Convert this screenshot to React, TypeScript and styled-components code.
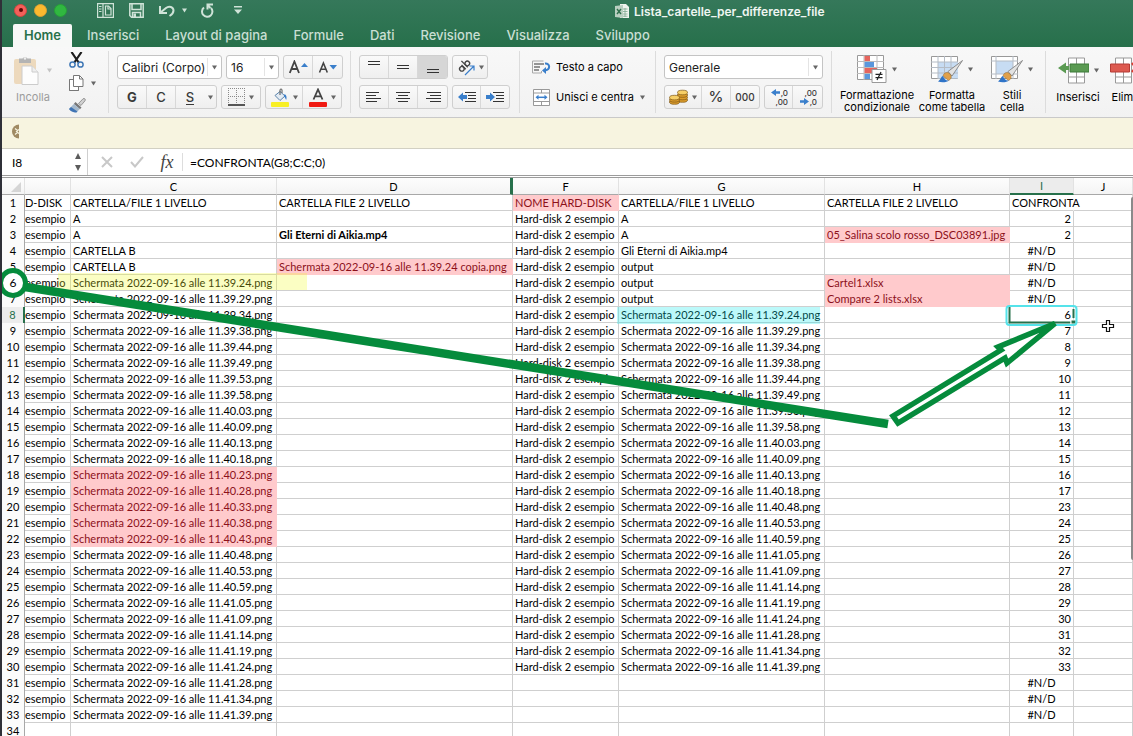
import React from "react";
import styled, { createGlobalStyle, css } from "styled-components";

const GlobalStyle = createGlobalStyle`
  *, *::before, *::after { box-sizing: border-box; }
  html, body { margin: 0; padding: 0; }
  body { background: #fff; color: #000; font-family: Inter, "Liberation Sans", sans-serif; font-size: 12px; overflow: hidden; }
  button, input, select { font: inherit; color: inherit; margin: 0; padding: 0; }
  svg { display: block; flex: none; }
`;

const sheetFont = `Lato, "Liberation Sans", sans-serif`;

/* ---------- window ---------- */

const Window = styled.div`
  display: flex;
  flex-direction: column;
  height: 100vh;
  border-left: 2px solid #2f3038;
  overflow: hidden;
`;

const Header = styled.header`
  flex: none;
  background: linear-gradient(#35785a, #27704b);
`;

const TitleBar = styled.div`
  display: flex;
  align-items: center;
  height: 23px;
`;

const TitleTools = styled.div`
  display: flex;
  align-items: center;
  width: 613px;
  height: 23px;
  padding: 0 0 3px 12px;
`;

const Lights = styled.div`
  display: flex;
  gap: 7px;
  width: 83px;
`;

const Light = styled.button<{ $color: string; $ring: string }>`
  width: 13px;
  height: 13px;
  border: 1px solid ${(p) => p.$ring};
  border-radius: 50%;
  background: ${(p) => p.$color};
  display: grid;
  place-items: center;
`;

const LightDot = styled.span`
  width: 4px;
  height: 4px;
  border-radius: 50%;
  background: #5b0705;
`;

const QuickButton = styled.button<{ $gap?: number }>`
  border: 0;
  background: none;
  margin-right: ${(p) => p.$gap ?? 12}px;
`;

const Title = styled.h1`
  display: flex;
  align-items: center;
  gap: 5px;
  margin: 0;
  color: #eef5f1;
  font-size: 12px;
  font-weight: 600;
  white-space: nowrap;
`;

const Tabs = styled.nav`
  display: flex;
  height: 24px;
  padding: 1px 0 0 11px;
`;

const Tab = styled.button<{ $active?: boolean }>`
  border: 0;
  border-radius: 2px 2px 0 0;
  height: 23px;
  padding: 0 ${(p) => (p.$active ? 11 : 13)}px;
  margin-right: ${(p) => (p.$active ? 2 : 0)}px;
  background: ${(p) => (p.$active ? "#f7f8f7" : "transparent")};
  color: ${(p) => (p.$active ? "#277049" : "#c9dfd3")};
  font-size: 13px;
  font-weight: ${(p) => (p.$active ? 600 : 500)};
  line-height: 21px;
  white-space: nowrap;
`;

/* ---------- ribbon ---------- */

const Ribbon = styled.div`
  flex: none;
  display: flex;
  height: 71px;
  overflow: hidden;
  background: linear-gradient(#f8f8f8, #f2f2f2);
  border-bottom: 1px solid #c9c9c9;
`;

const Group = styled.section<{ $w?: number; $row?: boolean }>`
  flex: none;
  display: flex;
  flex-direction: ${(p) => (p.$row ? "row" : "column")};
  gap: 6px;
  width: ${(p) => (p.$w ? p.$w + "px" : "auto")};
  height: 62px;
  margin-top: 4px;
  padding: 4px 0 0 8px;
  border-right: 1px solid #dcdcdc;
`;

const Line = styled.div`
  display: flex;
  gap: 4px;
  height: 24px;
`;

const Segments = styled.div`
  display: flex;
  height: 24px;
  border: 1px solid #cfcfcf;
  border-radius: 3px;
  background: linear-gradient(#fafafa, #efefef);
  overflow: hidden;
`;

const Segment = styled.button<{ $w?: number; $on?: boolean; $plain?: boolean }>`
  display: flex;
  align-items: center;
  justify-content: center;
  gap: 4px;
  width: ${(p) => p.$w ?? 29}px;
  border: 0;
  border-right: ${(p) => (p.$plain ? "0" : "1px solid #d8d8d8")};
  background: ${(p) => (p.$on ? "#d6d6d6" : "transparent")};
  color: #3a3a3a;
  font-size: 13px;
  &:last-child { border-right: 0; }
`;

const Glyph = styled.span<{ $bold?: boolean; $under?: boolean; $size?: number }>`
  font-size: ${(p) => p.$size ?? 13}px;
  font-weight: ${(p) => (p.$bold ? 700 : 500)};
  line-height: 14px;
  border-bottom: ${(p) => (p.$under ? "1px solid #3a3a3a" : "0")};
`;

const Stack = styled.span`
  display: flex;
  flex-direction: column;
  align-items: center;
  gap: 1px;
`;

const SelectBox = styled.label<{ $w: number }>`
  display: flex;
  align-items: center;
  width: ${(p) => p.$w}px;
  height: 24px;
  border: 1px solid #c4c4c4;
  border-radius: 3px;
  background: #fff;
`;

const Select = styled.select`
  flex: 1;
  min-width: 0;
  height: 22px;
  padding-left: 4px;
  border: 0;
  appearance: none;
  background: transparent;
  color: #222;
  font-size: 12px;
`;

const SelectArrow = styled.span`
  display: grid;
  place-items: center;
  width: 14px;
  height: 18px;
  border-left: 1px solid #e4e4e4;
`;

const TextButton = styled.button`
  display: flex;
  align-items: center;
  gap: 6px;
  height: 24px;
  padding-left: 4px;
  border: 0;
  background: none;
  font-size: 11px;
  white-space: nowrap;
`;

const TextIcon = styled.span`
  display: flex;
  justify-content: center;
  width: 18px;
`;

const BigButton = styled.button<{ $w: number; $dim?: boolean }>`
  flex: none;
  display: flex;
  flex-direction: column;
  align-items: center;
  width: ${(p) => p.$w}px;
  border: 0;
  background: none;
  font-size: 11px;
  line-height: 12px;
  white-space: nowrap;
  color: ${(p) => (p.$dim ? "#8d8d8d" : "#000")};
  opacity: ${(p) => (p.$dim ? 0.85 : 1)};
`;

const BigIcon = styled.span<{ $gap?: number }>`
  display: flex;
  align-items: center;
  gap: ${(p) => p.$gap ?? 5}px;
  height: 30px;
  margin-bottom: 6px;
`;

const ClipTools = styled.div`
  display: flex;
  flex-direction: column;
  justify-content: space-between;
  height: 61px;
  margin: -3px 0 0 7px;
`;

const IconButton = styled.button`
  display: flex;
  align-items: center;
  gap: 7px;
  border: 0;
  background: none;
`;

/* ---------- bars ---------- */

const Notice = styled.div`
  flex: none;
  display: flex;
  align-items: center;
  height: 31px;
  padding: 0 0 3px 8px;
  background: #f7f4e0;
  border-bottom: 1px solid #d2d0c3;
`;

const FormulaBar = styled.div`
  flex: none;
  display: flex;
  align-items: center;
  height: 29px;
  background: #fff;
  border-bottom: 3px double #9b9b9b;
  font-family: ${sheetFont};
`;

const NameBox = styled.input`
  width: 72px;
  height: 24px;
  padding-left: 10px;
  border: 0;
  outline: 0;
  font-size: 12px;
  background: transparent;
`;

const Spinner = styled.button`
  width: 14px;
  height: 26px;
  border: 0;
  background: none;
  border-right: 1px solid #cfcfcf;
`;

const FormulaTool = styled.button`
  display: grid;
  place-items: center;
  width: 30px;
  height: 26px;
  border: 0;
  background: none;
  font-family: "Liberation Serif", serif;
  font-style: italic;
  font-size: 18px;
  color: #444;
`;

const FormulaTools = styled.div`
  display: flex;
  align-items: center;
  padding-left: 4px;
  height: 18px;
  border-right: 1px solid #ddd;
`;

const FormulaInput = styled.input`
  flex: 1;
  min-width: 0;
  height: 24px;
  padding-left: 7px;
  border: 0;
  outline: 0;
  font-size: 12px;
  background: transparent;
`;

/* ---------- sheet ---------- */

const Sheet = styled.main`
  position: relative;
  flex: 1;
  min-height: 0;
`;

const Grid = styled.table`
  width: 100%;
  table-layout: fixed;
  border-collapse: separate;
  border-spacing: 0;
  font-family: ${sheetFont};
  font-size: 11px;
  line-height: 15px;
`;

const ColHead = styled.th<{ $active?: boolean; $mark?: boolean }>`
  height: 17px;
  padding: 0;
  font-weight: 400;
  line-height: 15px;
  background: ${(p) => (p.$active ? "#ececec" : "linear-gradient(#fdfdfd, #f4f4f4)")};
  color: ${(p) => (p.$active ? "#27704b" : "#000")};
  border-right: 1px solid #e2e2e2;
  border-bottom: 1px solid #a8a8a8;
  ${(p) => p.$active && css`border-bottom: 2px solid #27704b;`}
  ${(p) => p.$mark && css`border-right: 3px solid #27704b;`}
`;

const RowHead = styled.th<{ $active?: boolean }>`
  height: 16px;
  padding: 0 0 1px;
  font-weight: 400;
  text-align: center;
  background: ${(p) => (p.$active ? "#ececec" : "#fbfbfb")};
  color: ${(p) => (p.$active ? "#27704b" : "#000")};
  border-right: 1px solid #a8a8a8;
  ${(p) => p.$active && css`border-right: 2px solid #27704b;`}
`;

type Align = "left" | "center" | "right";

const Cell = styled.td<{ $align?: Align; $flag?: boolean; $bold?: boolean; $spill?: boolean; $cut?: boolean }>`
  height: 16px;
  padding: 0 2px;
  padding-left: ${(p) => (p.$cut ? 0 : 2)}px;
  white-space: nowrap;
  overflow: ${(p) => (p.$cut ? "hidden" : "visible")};
  text-align: ${(p) => p.$align ?? "left"};
  font-weight: ${(p) => (p.$bold ? 700 : 400)};
  color: ${(p) => (p.$flag ? "#8c101a" : "#000")};
  background: ${(p) => (p.$flag ? "#ffcacc" : "transparent")};
  border-right: 1px solid ${(p) => (p.$flag ? "#ffcacc" : p.$spill ? "transparent" : "#cfcfcf")};
  border-bottom: 1px solid ${(p) => (p.$flag ? "#ffcacc" : "#cfcfcf")};
`;

const Annotations = styled.svg`
  position: absolute;
  top: 0;
  left: 0;
  overflow: visible;
  pointer-events: none;
`;

const Highlight = styled.rect`
  opacity: 0.28;
`;

const ScrollThumb = styled.div`
  position: absolute;
  top: 19px;
  right: 0;
  width: 2px;
  height: 363px;
  border-radius: 2px 0 0 2px;
  background: #8a8a8a;
`;

/* ---------- icons ---------- */

const Down = ({ color = "#666", w = 6 }: { color?: string; w?: number }) => (
  <svg width={w} height={5} viewBox="0 0 6 5"><path d="M0 0h6L3 5z" fill={color} /></svg>
);

const quick = "#cfe3d8";

const IconPanes = () => (
  <svg width="17" height="15" viewBox="0 0 17 15" fill="none" stroke={quick} strokeWidth="1.2">
    <path d="M.6.600h15.800v13.800H.6zM6 1v13" />
    <path d="M2 3.500h2.500M2 6h2.500M2 8.500h2.500" strokeWidth="1" />
    <path d="M8.500 3h3l2.500 2.500V12H8.500z" /><path d="M11 3v3h3" />
  </svg>
);
const IconSave = () => (
  <svg width="15" height="15" viewBox="0 0 15 15" fill="none" stroke={quick} strokeWidth="1.500">
    <path d="M.8.8h13.400v13.400H2.500L.8 12.500zM3 1v5.500h9V1" />
    <path d="M3.500 14V9.500h8V14" /><path d="M4.500 10.500H7V14H4.500z" fill={quick} stroke="none" />
  </svg>
);
const IconUndo = () => (
  <svg width="16" height="13" viewBox="0 0 16 13" fill="none" stroke={quick} strokeWidth="2">
    <path d="M1 2v7h7M1.500 8.500L7 4c3-2.500 7.500-1 7.500 2.500 0 2.500-1.500 4-4 5.500" />
  </svg>
);
const IconRedo = () => (
  <svg width="13" height="15" viewBox="0 0 13 15" fill="none" stroke={quick} strokeWidth="2">
    <path d="M3 4.500A5.200 5.200 0 1 0 10 5" /><path d="M6.500 6.500V1.500H12M6.500 2l3 3" />
  </svg>
);
const IconCustomize = () => (
  <svg width="8" height="8" viewBox="0 0 8 8" fill={quick}><path d="M0 0h8v1.500H0zM0 3.500h8L4 8z" /></svg>
);
const IconDoc = () => (
  <svg width="14" height="15" viewBox="0 0 14 15">
    <path d="M5 0h6l3 3v11H5z" fill="#eef3ee" />
    <path d="M7.500 5h5M7.500 7.500h5M7.500 10h5M7.500 12.200h5M10 4v9" stroke="#7ea890" strokeWidth=".8" />
    <path d="M0 2l8-1v13l-8-1z" fill="#b9cfc1" />
    <path d="M2 5l4 5M6 5l-4 5" stroke="#2f6f4c" strokeWidth="1.400" />
  </svg>
);
const IconPaste = () => (
  <svg width="25" height="31" viewBox="0 0 25 31">
    <rect x="0" y="4" width="22" height="25" rx="2" fill="#ecd5b4" />
    <path d="M5 3.500h3.500a3 3 0 0 1 5 0H17V8H5z" fill="#a9a9a9" />
    <circle cx="11" cy="3.500" r="1.200" fill="#eee" />
    <path d="M8 11h10l6 6v12.500H8z" fill="#fff" stroke="#c6c6c6" /><path d="M18 11v6h6" fill="#eee" stroke="#c6c6c6" />
  </svg>
);
const IconCut = () => (
  <svg width="15" height="16" viewBox="0 0 15 16" fill="none">
    <path d="M2.500 0l7.500 11M12.500 0L5 11" stroke="#1d1d1d" strokeWidth="2.200" />
    <circle cx="3.500" cy="12.500" r="2.600" stroke="#3f77b5" strokeWidth="1.500" /><circle cx="11.500" cy="12.500" r="2.600" stroke="#3f77b5" strokeWidth="1.500" />
  </svg>
);
const IconCopy = () => (
  <svg width="15" height="16" viewBox="0 0 15 16" fill="#fff" stroke="#777">
    <path d="M.5 4.500h4V15.500h-4z" />
    <path d="M.5 4.500h5v11h4v-4" />
    <path d="M.5 4.500v11h9v-4" />
    <path d="M4.500.5h6l3.500 3.500v7.500H4.500z" /><path d="M10.500.5V4H14" fill="none" />
  </svg>
);
const IconBrush = () => (
  <svg width="17" height="15" viewBox="0 0 17 15">
    <path d="M9.500 5.500L14 .8c1.500-1 3 .6 2 2L12 7.500z" fill="#d0d0d0" stroke="#777" strokeWidth=".7" />
    <path d="M6.500 4l6 5.500-1.500 1.800L4.800 6z" fill="#777" />
    <path d="M4.800 6l6 5-3.500 3.500C4 14.500 1.500 13 0 11z" fill="#a5b9cc" />
    <path d="M2 9l6.500 4.500-1.200 1C4 14.500 1.500 13 0 11z" fill="#3f74b5" />
  </svg>
);
const SizeLetter = ({ up }: { up?: boolean }) => (
  <svg width="19" height="14" viewBox="0 0 19 14">
    {up ? <path d="M.8 13L5.400 1.500 10 13M2.500 9h6" fill="none" stroke="#444" strokeWidth="1.800" /> : <path d="M1.500 12.500l3.900-9.500 3.900 9.500M3 9.200h5" fill="none" stroke="#444" strokeWidth="1.600" />}
    <path d={up ? "M12 7h7l-3.500-4z" : "M11.500 5H19l-3.700 4.500z"} fill="#3a7fcb" />
  </svg>
);
const IconBorders = () => (
  <svg width="17" height="18" viewBox="0 0 17 18" fill="none" stroke="#8a8a8a">
    <path d="M.5 0v16M16.500 0v16M0 .5h17M8.500 0v16M0 8.500h17" strokeDasharray="1 1" /><path d="M0 17h17" stroke="#222" strokeWidth="1.500" />
  </svg>
);
const IconFill = () => (
  <svg width="18" height="19" viewBox="0 0 18 19">
    <path d="M4 7.500l5-4 5 4.500-5 4.500z" fill="#e3ebf3" stroke="#5b83aa" />
    <path d="M9 7V2c0-1.500 2-1.500 2 0v3" fill="none" stroke="#555" />
    <path d="M13.500 6c2 1 2.500 3 1.700 6L13 8z" fill="#3a7fcb" />
    <rect x="0" y="14" width="18" height="5" rx="1" fill="#f8ef25" />
  </svg>
);
const IconFontColor = () => (
  <svg width="18" height="19" viewBox="0 0 18 19">
    <path d="M4.500 11.500L9 1.500l4.500 10M6 8.300h6" fill="none" stroke="#444" strokeWidth="1.800" />
    <rect x="0" y="14" width="18" height="5" rx="1" fill="#f01a12" />
  </svg>
);
const Rules = ({ d, h = 12 }: { d: string; h?: number }) => (
  <svg width="16" height={h} viewBox={`0 0 16 ${h}`}><path d={d} stroke="#333" strokeWidth="1" /></svg>
);
const IconOrient = () => (
  <svg width="18" height="18" viewBox="0 0 18 18" fill="none" stroke="#444" strokeWidth="1.300">
    <g transform="rotate(-45 7 8)">
      <circle cx="3.500" cy="8.500" r="2.300" /><path d="M6 5.500v6" />
      <path d="M8.800 2.500v9" /><circle cx="11.200" cy="8.500" r="2.300" />
    </g>
    <path d="M8 17l8.500-8.500M12.500 8h4.500v4.500" stroke="#3a7fcb" strokeWidth="1.200" />
  </svg>
);
const IconIndent = ({ right }: { right?: boolean }) => (
  <svg width="18" height="12" viewBox="0 0 18 12">
    <path d="M7 1.500h11M10 4.500h8M10 7.500h8M7 10.500h11" stroke="#333" />
    <path d={right ? "M0 4h4V1.500L9 6l-5 4.500V8H0z" : "M9 4H5V1.500L0 6l5 4.500V8h4z"} fill="#3a7fcb" />
  </svg>
);
const IconWrap = () => (
  <svg width="19" height="14" viewBox="0 0 19 14" fill="none">
    <path d="M.5 1h11M.5 1v12M.5 13h9v-2" stroke="#aaa" /><path d="M2 4h10M2 7h6M2 10h5" stroke="#333" />
    <path d="M13 3.500c5-.5 6 6 0 7" stroke="#3a7fcb" strokeWidth="2" /><path d="M10 10.500l4-3.500v7z" fill="#3a7fcb" />
  </svg>
);
const IconMerge = () => (
  <svg width="17" height="17" viewBox="0 0 17 17" fill="none">
    <path d="M.5.5h16v16H.5zM8.500 0v4M8.500 13v4M.5 4h16M.5 12.500h16" stroke="#999" fill="#fff" />
    <path d="M4 8.300h9" stroke="#3a7fcb" strokeWidth="1.500" /><path d="M2.500 8.300l3-2.500v5zM14.500 8.300l-3-2.500v5z" fill="#3a7fcb" />
  </svg>
);
const IconCoins = () => (
  <svg width="19" height="16" viewBox="0 0 19 16" stroke="#7c5616" strokeWidth=".7">
    {[11, 8.5, 6, 3.5].map((y) => <ellipse key={y} cx="13.500" cy={y} rx="5" ry="2.300" fill={y === 3.5 ? "#f6cf68" : "#dc9c2c"} />)}
    {[13, 10.8, 8.6].map((y) => <ellipse key={y} cx="5.500" cy={y} rx="5" ry="2.300" fill={y === 8.6 ? "#f6cf68" : "#dc9c2c"} />)}
  </svg>
);
const DecimalRow = styled.span`
  display: flex;
  align-items: center;
  justify-content: flex-end;
  gap: 1px;
  width: 19px;
  font-size: 8px;
  line-height: 8px;
  font-weight: 500;
`;
const Arrow = ({ right }: { right?: boolean }) => (
  <svg width="9" height="7" viewBox="0 0 9 7"><path d={right ? "M0 2.300h4V0l5 3.500L4 7V4.700H0z" : "M9 2.300H5V0L0 3.500 5 7V4.700h4z"} fill="#3a7fcb" /></svg>
);
const IconConditional = () => (
  <svg width="30" height="28" viewBox="0 0 30 28">
    <path d="M.5.5h26v24H.5z" fill="#fff" stroke="#999" />
    <path d="M7 0v25M20 0v25M0 6.500h27M0 12.500h27M0 18.500h27" stroke="#bbb" />
    <path d="M7.500 1H13v5H7.500zM7.500 13H20v5H7.500z" fill="#e5655e" /><path d="M7.500 7H17v5H7.500zM7.500 19H13v5H7.500z" fill="#5a97dc" />
    <path d="M15 14.500h14v13H15z" fill="#fff" stroke="#999" />
    <path d="M18.500 19.300h7M18.500 22.700h7M24 17l-4 8" stroke="#222" strokeWidth="1.200" />
  </svg>
);
const PaintBrush = () => (
  <g>
    <path d="M31.500 5.500L17 16.500l4 4.500z" fill="#e2e2e2" stroke="#777" strokeWidth=".8" />
    <path d="M12 21c1-4 5-4.500 7-2s1.500 5-1.500 6.500z" fill="#e0a04a" stroke="#8a6530" strokeWidth=".5" />
    <path d="M12 21c-2 .5-2.500 4-5 5.500 4 1.500 9 .8 11-1-3 .5-5-1.500-6-4.500z" fill="#2f74c8" />
  </g>
);
const IconTable = () => (
  <svg width="32" height="28" viewBox="0 0 32 28">
    <path d="M.5 1.500h26v22H.5z" fill="#fff" stroke="#999" /><path d="M7 7h20v16.500H7z" fill="#c7dcf3" />
    <path d="M7 1v23M13.500 1v23M20 1v23M0 7h27M0 12.500h27M0 18h27" stroke="#b5bcc5" /><PaintBrush />
  </svg>
);
const IconCellStyle = () => (
  <svg width="32" height="28" viewBox="0 0 32 28">
    <path d="M.5 1.500h26v22H.5z" fill="#fff" stroke="#999" /><path d="M5 6h17v13H5z" fill="#c7dcf3" />
    <path d="M5 1v23M22 1v23M0 6h27M0 19h27" stroke="#b5bcc5" /><PaintBrush />
  </svg>
);
const IconInsert = () => (
  <svg width="31" height="27" viewBox="0 0 31 27">
    <path d="M10.500 1h16v25h-16zM18.500 1v25M10 20h17" fill="#fff" stroke="#999" />
    <path d="M12 7h19v8H12z" fill="#5a9a52" stroke="#3c7a38" /><path d="M11 9H8V5.500L0 11l8 5.500V13h3z" fill="#5a9a52" />
  </svg>
);
const IconDelete = () => (
  <svg width="31" height="27" viewBox="0 0 31 27">
    <path d="M5.500 1h16v25h-16zM13.500 1v25M5 20h17" fill="#fff" stroke="#999" />
    <path d="M.5 7h19v8H.5z" fill="#dd5a50" stroke="#b53b34" /><path d="M22 6l8 9M30 6l-8 9" stroke="#dd3c32" strokeWidth="2.500" />
  </svg>
);
const IconNotice = () => (
  <svg width="9" height="15" viewBox="0 0 9 15">
    <path d="M9 .5a7 7 0 0 0 0 14z" fill="#a08a63" /><path d="M5 4.500l2.500 2M9 5.500L6.500 7.500 9 9.500M5 10.500l2.500-2" fill="none" stroke="#f7f4e0" strokeWidth="1.200" />
  </svg>
);

/* ---------- data ---------- */

const shot = (t: string) => `Schermata 2022-09-16 alle ${t}.png`;

const times = [
  "11.39.24", "11.39.29", "11.39.34", "11.39.38", "11.39.44", "11.39.49", "11.39.53", "11.39.58",
  "11.40.03", "11.40.09", "11.40.13", "11.40.18", "11.40.23", "11.40.28", "11.40.33", "11.40.38",
  "11.40.43", "11.40.48", "11.40.53", "11.40.59", "11.41.05", "11.41.09", "11.41.14", "11.41.19",
  "11.41.24", "11.41.28", "11.41.34", "11.41.39",
];
const missing = times.slice(12, 17);
const secondDisk = times.filter((t) => !missing.includes(t));

type Row = { n: number; b: string; c: string; d: string; f: string; g: string; h: string; i: string };

const lead: Record<number, [string, string, string, string]> = {
  1: ["CARTELLA/FILE 1 LIVELLO", "CARTELLA FILE 2 LIVELLO", "CARTELLA/FILE 1 LIVELLO", "CARTELLA FILE 2 LIVELLO"],
  2: ["A", "", "A", ""],
  3: ["A", "Gli Eterni di Aikia.mp4", "A", "05_Salina scolo rosso_DSC03891.jpg"],
  4: ["CARTELLA B", "", "Gli Eterni di Aikia.mp4", ""],
  5: ["CARTELLA B", shot("11.39.24 copia").replace(".png", ".png"), "output", ""],
  6: [shot(times[0]), "", "output", "Cartel1.xlsx"],
  7: [shot(times[1]), "", "output", "Compare 2 lists.xlsx"],
};

const compare = (n: number) => {
  if (n === 1) return "CONFRONTA";
  if (n <= 3) return "2";
  if (n <= 7 || n > 30) return "#N/D";
  return String(n <= 19 ? n - 2 : n + 3);
};

const rows: Row[] = Array.from({ length: 34 }, (_, k) => {
  const n = k + 1;
  if (n === 34) return { n, b: "", c: "", d: "", f: "", g: "", h: "", i: "" };
  const [c, d, g, h] = lead[n] ?? [shot(times[n - 6]), "", n <= 30 ? shot(secondDisk[n - 8]) : "", ""];
  return {
    n, c, d, g, h,
    b: n === 1 ? "D-DISK" : "esempio",
    f: n === 1 ? "NOME HARD-DISK" : n <= 30 ? "Hard-disk 2 esempio" : "",
    i: compare(n),
  };
});

const colWidths = [23, 46, 206, 236, 106, 206, 185, 64];
const columns = ["", "C", "D", "F", "G", "H", "I", "J"];
const tabs = ["Inserisci", "Layout di pagina", "Formule", "Dati", "Revisione", "Visualizza", "Sviluppo"];

export default function App() {
  return (
    <>
      <GlobalStyle />
      <Window>
        <Header>
          <TitleBar>
            <TitleTools>
              <Lights>
                <Light aria-label="Chiudi" $color="#f4605a" $ring="#d84640"><LightDot /></Light>
                <Light aria-label="Riduci" $color="#fbb92f" $ring="#dda032" />
                <Light aria-label="Ingrandisci" $color="#30b840" $ring="#27a136" />
              </Lights>
              <QuickButton aria-label="Riquadri" $gap={15}><IconPanes /></QuickButton>
              <QuickButton aria-label="Salva" $gap={15}><IconSave /></QuickButton>
              <QuickButton aria-label="Annulla" $gap={7}><IconUndo /></QuickButton>
              <QuickButton aria-label="Opzioni annulla" $gap={14}><Down color={quick} w={5} /></QuickButton>
              <QuickButton aria-label="Ripeti" $gap={20}><IconRedo /></QuickButton>
              <QuickButton aria-label="Personalizza"><IconCustomize /></QuickButton>
            </TitleTools>
            <Title><IconDoc />Lista_cartelle_per_differenze_file</Title>
          </TitleBar>
          <Tabs>
            <Tab $active>Home</Tab>
            {tabs.map((t) => <Tab key={t}>{t}</Tab>)}
          </Tabs>
        </Header>

        <Ribbon>
          <Group $w={107} $row>
            <BigButton $w={46} $dim>
              <BigIcon $gap={8}><IconPaste /><Down color="#bbb" w={5} /></BigIcon>
              Incolla
            </BigButton>
            <ClipTools>
              <IconButton aria-label="Taglia"><IconCut /></IconButton>
              <IconButton aria-label="Copia"><IconCopy /><Down w={5} /></IconButton>
              <IconButton aria-label="Copia formato"><IconBrush /></IconButton>
            </ClipTools>
          </Group>

          <Group $w={242}>
            <Line>
              <SelectBox $w={105}>
                <Select aria-label="Tipo di carattere"><option>Calibri (Corpo)</option></Select>
                <SelectArrow><Down w={5} /></SelectArrow>
              </SelectBox>
              <SelectBox $w={53}>
                <Select aria-label="Dimensione"><option>16</option></Select>
                <SelectArrow><Down w={5} /></SelectArrow>
              </SelectBox>
              <Segments>
                <Segment aria-label="Aumenta carattere"><SizeLetter up /></Segment>
                <Segment aria-label="Riduci carattere"><SizeLetter /></Segment>
              </Segments>
            </Line>
            <Line>
              <Segments>
                <Segment><Glyph $bold>G</Glyph></Segment>
                <Segment><Glyph>C</Glyph></Segment>
                <Segment $plain $w={28}><Glyph $under>S</Glyph></Segment>
                <Segment $w={12} aria-label="Sottolineature"><Down w={5} /></Segment>
              </Segments>
              <Segments>
                <Segment $w={38} aria-label="Bordi"><IconBorders /><Down w={5} /></Segment>
              </Segments>
              <Segments>
                <Segment $w={37} aria-label="Riempimento"><IconFill /><Down w={5} /></Segment>
                <Segment $w={38} aria-label="Colore carattere"><IconFontColor /><Down w={5} /></Segment>
              </Segments>
            </Line>
          </Group>

          <Group $w={169}>
            <Line>
              <Segments>
                <Segment aria-label="Allinea in alto"><Rules d="M2 1.500h12M2 4.500h12" h={14} /></Segment>
                <Segment aria-label="Allinea al centro"><Rules d="M2 4.500h12M2 7.500h12" /></Segment>
                <Segment $on aria-label="Allinea in basso"><Rules d="M2 9.500h12M2 12.500h12" h={14} /></Segment>
              </Segments>
              <Segments>
                <Segment $w={34} aria-label="Orientamento"><IconOrient /><Down w={5} /></Segment>
              </Segments>
            </Line>
            <Line>
              <Segments>
                <Segment aria-label="Sinistra"><Rules d="M0 1.500h13M0 4.500h10M0 7.500h15M0 10.500h11" /></Segment>
                <Segment aria-label="Centro"><Rules d="M1 1.500h14M3 4.500h10M1 7.500h14M3 10.500h10" /></Segment>
                <Segment aria-label="Destra"><Rules d="M2 1.500h14M5 4.500h11M1 7.500h15M5 10.500h11" /></Segment>
              </Segments>
              <Segments>
                <Segment $w={28} aria-label="Riduci rientro"><IconIndent /></Segment>
                <Segment $w={28} aria-label="Aumenta rientro"><IconIndent right /></Segment>
              </Segments>
            </Line>
          </Group>

          <Group $w={136}>
            <TextButton><TextIcon><IconWrap /></TextIcon>Testo a capo</TextButton>
            <TextButton><TextIcon><IconMerge /></TextIcon>Unisci e centra<Down w={5} /></TextButton>
          </Group>

          <Group $w={176}>
            <Line>
              <SelectBox $w={159}>
                <Select aria-label="Formato numero"><option>Generale</option></Select>
                <SelectArrow><Down w={5} /></SelectArrow>
              </SelectBox>
            </Line>
            <Line>
              <Segments>
                <Segment $w={37} aria-label="Valuta"><IconCoins /><Down w={5} /></Segment>
                <Segment><Glyph $size={15}>%</Glyph></Segment>
                <Segment $w={28}><Glyph $size={10}>000</Glyph></Segment>
              </Segments>
              <Segments>
                <Segment $w={28}><Stack><DecimalRow><Arrow />,0</DecimalRow><DecimalRow>,00</DecimalRow></Stack></Segment>
                <Segment><Stack><DecimalRow>,00</DecimalRow><DecimalRow><Arrow right />,0</DecimalRow></Stack></Segment>
              </Segments>
            </Line>
          </Group>

          <Group $w={214} $row>
            <BigButton $w={74}>
              <BigIcon><IconConditional /><Down w={5} /></BigIcon>
              Formattazione<br />condizionale
            </BigButton>
            <BigButton $w={64}>
              <BigIcon><IconTable /><Down w={5} /></BigIcon>
              Formatta<br />come tabella
            </BigButton>
            <BigButton $w={44}>
              <BigIcon><IconCellStyle /><Down w={5} /></BigIcon>
              Stili<br />cella
            </BigButton>
          </Group>

          <Group $row>
            <BigButton $w={48}>
              <BigIcon><IconInsert /><Down w={5} /></BigIcon>
              Inserisci
            </BigButton>
            <BigButton $w={44}>
              <BigIcon><IconDelete /><Down w={5} /></BigIcon>
              Elimina
            </BigButton>
          </Group>
        </Ribbon>

        <Notice><IconNotice /></Notice>

        <FormulaBar>
          <NameBox aria-label="Casella nome" defaultValue="I8" />
          <Spinner aria-label="Scorri nomi">
            <svg width="8" height="18" viewBox="0 0 8 18" fill="#5c5c5c"><path d="M1 6h6L4 0zM1 12h6l-3 6z" /></svg>
          </Spinner>
          <FormulaTools>
            <FormulaTool aria-label="Annulla immissione">
              <svg width="12" height="12" viewBox="0 0 12 12" stroke="#c8c8c8" strokeWidth="2"><path d="M1 1l10 10M11 1L1 11" /></svg>
            </FormulaTool>
            <FormulaTool aria-label="Conferma">
              <svg width="14" height="12" viewBox="0 0 14 12" fill="none" stroke="#c8c8c8" strokeWidth="2"><path d="M1 6l4 4.500L13 1" /></svg>
            </FormulaTool>
            <FormulaTool>fx</FormulaTool>
          </FormulaTools>
          <FormulaInput aria-label="Formula" defaultValue="=CONFRONTA(G8;C:C;0)" />
        </FormulaBar>

        <Sheet>
          <Grid>
            <colgroup>
              {colWidths.map((w, i) => <col key={i} style={{ width: w }} />)}
              <col />
            </colgroup>
            <thead>
              <tr>
                <ColHead aria-label="Seleziona tutto">
                  <svg width="22" height="15" viewBox="0 0 22 15"><path d="M19 3v10H9z" fill="#d5d5d5" /></svg>
                </ColHead>
                {columns.map((c) => <ColHead key={c} $active={c === "I"} $mark={c === "D"}>{c}</ColHead>)}
              </tr>
            </thead>
            <tbody>
              {rows.map((r) => (
                <tr key={r.n}>
                  <RowHead $active={r.n === 8}>{r.n}</RowHead>
                  <Cell $cut>{r.b}</Cell>
                  <Cell $flag={r.n >= 18 && r.n <= 22}>{r.c}</Cell>
                  <Cell $bold={r.n === 3} $flag={r.n === 5}>{r.d}</Cell>
                  <Cell $flag={r.n === 1}>{r.f}</Cell>
                  <Cell>{r.g}</Cell>
                  <Cell $flag={r.n > 1 && r.h !== ""}>{r.h}</Cell>
                  <Cell $spill={r.n === 1} $align={r.n === 1 ? "left" : r.i === "#N/D" ? "center" : "right"}>{r.i}</Cell>
                  <Cell />
                </tr>
              ))}
            </tbody>
          </Grid>

          <Annotations width="1131" height="558" aria-hidden="true">
            <g transform="translate(-2 -178)">
              <Highlight x="58" y="273" width="249" height="17" fill="#f0fa28" />
              <Highlight x="617" y="307" width="203" height="17" fill="#10e8ee" />
              <path d="M1009.500 307v15.500h61M1073.500 309v9" fill="none" stroke="#27704b" strokeWidth="2" />
              <rect x="1071" y="320" width="5" height="4" fill="#27704b" stroke="#fff" strokeWidth="1" />
              <rect x="1006.500" y="306" width="70" height="19" rx="3" fill="none" stroke="#55e3ea" strokeWidth="2" />
              <path d="M25 287L888 424" stroke="#058b3c" strokeWidth="8.500" />
              <circle cx="13" cy="283" r="12.500" fill="#fff" stroke="#058b3c" strokeWidth="5" />
              <text x="13" y="287" textAnchor="middle" fontFamily="Lato, sans-serif" fontSize="12">6</text>
              <path d="M893 416L1001 350L998 347L1055 323.500L1007 363L1005 358L898 423Z" fill="#fff" stroke="#058b3c" strokeWidth="5.500" />
              <path d="M1106.500 320.500h3v4h4v3h-4v4h-3v-4h-4v-3h4z" fill="#fff" stroke="#111" strokeWidth="1.200" />
            </g>
          </Annotations>
          <ScrollThumb />
        </Sheet>
      </Window>
    </>
  );
}
